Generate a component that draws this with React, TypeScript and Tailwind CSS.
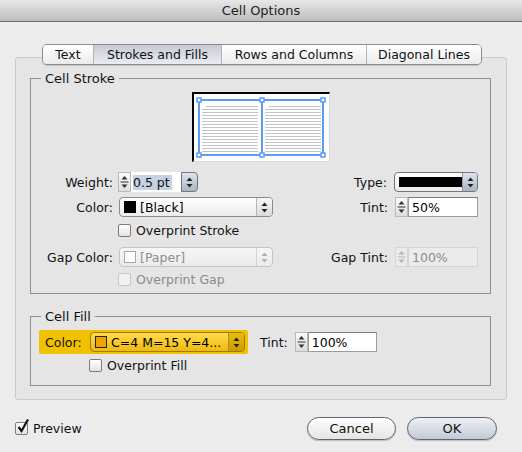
import type { ReactNode } from "react";

const font = "font-['DejaVu_Sans',sans-serif]";

function UpDown({ color = "#222" }: { color?: string }) {
  return (
    <svg width="7" height="11" viewBox="0 0 7 11">
      <path d="M3.5 0.5 L6.5 4 L0.5 4 Z" fill={color} />
      <path d="M0.5 7 L6.5 7 L3.5 10.5 Z" fill={color} />
    </svg>
  );
}

function Stepper({ disabled = false }: { disabled?: boolean }) {
  const c = disabled ? "#b4b4b4" : "#333";
  return (
    <div
      className={`flex h-[20px] w-[13px] shrink-0 items-center justify-center border ${
        disabled ? "border-[#d6d6d6] bg-[#ebebeb]" : "border-[#b9b9b9] bg-gradient-to-b from-[#fafafa] to-[#dedede]"
      }`}
    >
      <svg width="9" height="16" viewBox="0 0 9 16">
        <path d="M4.5 2 L7.5 5.5 L1.5 5.5 Z" fill={c} />
        <line x1="0.5" y1="8" x2="8.5" y2="8" stroke={c} strokeWidth="1" />
        <path d="M1.5 10.5 L7.5 10.5 L4.5 14 Z" fill={c} />
      </svg>
    </div>
  );
}

function Field({
  w,
  children,
  disabled = false,
}: {
  w: string;
  children: ReactNode;
  disabled?: boolean;
}) {
  return (
    <div
      className={`flex h-[20px] items-center border pl-[3px] ${w} ${
        disabled
          ? "border-[#d4d4d4] bg-[#ebebeb] text-[#8c8c8c]"
          : "border-[#9c9c9c] border-t-[#7a7a7a] bg-white text-black"
      }`}
    >
      {children}
    </div>
  );
}

type PopupKind = "normal" | "disabled" | "fill" | "blue";

function Popup({
  w,
  kind = "normal",
  children,
}: {
  w: string;
  kind?: PopupKind;
  children: ReactNode;
}) {
  const shell = {
    normal: "border-[#8a8a8a] bg-gradient-to-b from-white to-[#ececec] text-black",
    disabled: "border-[#c4c4c4] bg-gradient-to-b from-[#f6f6f6] to-[#ebebeb] text-[#8e8e8e]",
    fill: "border-[#a07a00] bg-gradient-to-b from-[#ffdc4a] to-[#f0b900] text-black",
    blue: "border-[#70757f] bg-gradient-to-b from-white to-[#ececec] text-black",
  }[kind];
  const arrow = {
    normal: "border-[#b6b6b6] bg-gradient-to-b from-[#f6f6f6] to-[#dadada]",
    disabled: "border-[#d2d2d2] bg-transparent",
    fill: "border-[#b58f10] bg-gradient-to-b from-[#e9bd10] to-[#c99a00]",
    blue: "border-[#8c96a4] bg-gradient-to-b from-[#dfe5ee] to-[#aab5c4]",
  }[kind];
  return (
    <div className={`flex h-[20px] items-stretch overflow-hidden rounded-[4px] border ${shell} ${w}`}>
      <div className="flex flex-1 items-center gap-[4px] pl-[4px]">{children}</div>
      <div className={`flex w-[16px] items-center justify-center border-l ${arrow}`}>
        <UpDown color={kind === "disabled" ? "#b0b0b0" : "#222"} />
      </div>
    </div>
  );
}

function Check({ on = false, disabled = false }: { on?: boolean; disabled?: boolean }) {
  return (
    <div className="relative h-[13px] w-[13px] shrink-0">
      <div
        className={`h-[13px] w-[13px] rounded-[2px] border ${
          disabled
            ? "border-[#c6c6c6] bg-[#f1f1f1]"
            : "border-[#7c7c7c] bg-gradient-to-b from-white to-[#e2e2e2]"
        }`}
      />
      {on && (
        <svg className="absolute -top-[4px] left-[1px]" width="14" height="16" viewBox="0 0 14 16">
          <path d="M2.5 9 L5.5 13 L12 1.5" fill="none" stroke="#111" strokeWidth="2.2" />
        </svg>
      )}
    </div>
  );
}

function Swatch({ color, border = "#000" }: { color: string; border?: string }) {
  return (
    <div className="h-[12px] w-[12px] shrink-0 border" style={{ background: color, borderColor: border }} />
  );
}

function CellPreview() {
  const ys = Array.from({ length: 16 }, (_, i) => 12 + i * 3);
  return (
    <div className="mx-auto mt-[6px] h-[70px] w-[138px] border-t-2 border-l-2 border-r border-b border-t-black border-l-black border-r-[#d8d8d8] border-b-[#d8d8d8] bg-white">
      <svg width="136" height="68" viewBox="0 0 136 68">
        {ys.map((y, i) => (
          <g key={y} stroke="#c4c4c4" strokeWidth="1">
            <line x1={i === 0 ? 12 : 8} y1={y + 0.5} x2="64" y2={y + 0.5} />
            <line x1={i === 0 ? 75 : 71} y1={y + 0.5} x2="127" y2={y + 0.5} />
          </g>
        ))}
        <rect x="5" y="6" width="124" height="55" fill="none" stroke="#5b9cf5" strokeWidth="2" />
        <line x1="68" y1="6" x2="68" y2="61" stroke="#5b9cf5" strokeWidth="2" />
        {[
          [5, 6],
          [68, 6],
          [129, 6],
          [5, 61],
          [68, 61],
          [129, 61],
        ].map(([x, y]) => (
          <rect key={`${x}-${y}`} x={x - 2} y={y - 2} width="4" height="4" fill="#fff" stroke="#5b9cf5" strokeWidth="1.5" />
        ))}
      </svg>
    </div>
  );
}

function Label({ children, w = "w-[82px]" }: { children: ReactNode; w?: string }) {
  return <div className={`${w} shrink-0 text-right text-[#111]`}>{children}</div>;
}

const tabs = [
  { name: "Text", w: "w-[50px]" },
  { name: "Strokes and Fills", w: "w-[128px]", on: true },
  { name: "Rows and Columns", w: "w-[145px]" },
  { name: "Diagonal Lines", w: "w-[115px]" },
];

export default function App() {
  return (
    <div className={`flex h-[452px] w-[522px] flex-col bg-[#ececec] text-[12.5px] leading-[15px] text-[#111] ${font}`}>
      {/* title bar */}
      <div className="flex h-[22px] items-center justify-center border-b border-[#6e6e6e] bg-gradient-to-b from-[#e8e8e8] to-[#bdbdbd] text-[13px] text-[#1e1e1e]">
        Cell Options
      </div>

      {/* tab strip */}
      <div className="relative z-10 mt-[22px] flex justify-center pl-[2px]">
        <div className="flex h-[21px] overflow-hidden rounded-[5px] border border-[#8b8b8b] shadow-[0_1px_1px_rgba(0,0,0,0.15)]">
          {tabs.map((t, i) => (
            <div
              key={t.name}
              className={`flex items-center justify-center ${t.w} ${i > 0 ? "border-l border-[#b4b4b4]" : ""} ${
                t.on ? "bg-gradient-to-b from-[#c6ccd5] to-[#e9ecf0]" : "bg-gradient-to-b from-white to-[#ebebeb]"
              }`}
            >
              {t.name}
            </div>
          ))}
        </div>
      </div>

      {/* tab body */}
      <div className="mx-[15px] -mt-[8px] h-[343px] rounded-[3px] border border-[#cacaca] bg-[#e5e5e5] pt-[13px] pr-[15px] pl-[14px]">
        <fieldset className="h-[223px] border border-[#8e8e8e] px-0">
          <legend className="ml-[10px] px-[4px] text-[13px]">Cell Stroke</legend>
          <CellPreview />

          <div className="mt-[10px] flex h-[20px] items-center pr-[12px]">
            <Label>Weight:</Label>
            <div className="ml-[5px] flex items-center">
              <Stepper />
              <div className="flex h-[20px] w-[50px] items-center bg-white pl-[2px]">
                <span className="bg-[#c5d2e3] pr-[2px]">0.5 pt</span>
              </div>
              <div className="flex h-[20px] w-[17px] items-center justify-center rounded-r-[4px] border border-[#70757f] bg-gradient-to-b from-[#dfe5ee] to-[#aab5c4]">
                <UpDown />
              </div>
            </div>
            <div className="ml-auto flex items-center">
              <Label w="w-auto">Type:</Label>
              <div className="ml-[7px]">
                <Popup w="w-[84px]" kind="blue">
                  <div className="h-[10px] w-[63px] bg-black" />
                </Popup>
              </div>
            </div>
          </div>

          <div className="mt-[5px] flex h-[20px] items-center pr-[12px]">
            <Label>Color:</Label>
            <div className="ml-[6px]">
              <Popup w="w-[154px]">
                <Swatch color="#000" />
                <span>[Black]</span>
              </Popup>
            </div>
            <div className="ml-auto flex items-center">
              <Label w="w-auto">Tint:</Label>
              <div className="ml-[7px] flex items-center">
                <Stepper />
                <Field w="w-[70px]">50%</Field>
              </div>
            </div>
          </div>

          <div className="mt-[6px] flex h-[14px] items-center gap-[5px] pl-[87px]">
            <Check />
            <span>Overprint Stroke</span>
          </div>

          <div className="mt-[10px] flex h-[20px] items-center pr-[12px]">
            <Label>Gap Color:</Label>
            <div className="ml-[6px]">
              <Popup w="w-[154px]" kind="disabled">
                <Swatch color="#fff" border="#a8a8a8" />
                <span>[Paper]</span>
              </Popup>
            </div>
            <div className="ml-auto flex items-center">
              <Label w="w-auto">Gap Tint:</Label>
              <div className="ml-[7px] flex items-center">
                <Stepper disabled />
                <Field w="w-[70px]" disabled>
                  100%
                </Field>
              </div>
            </div>
          </div>

          <div className="mt-[5px] flex h-[14px] items-center gap-[5px] pl-[87px] text-[#8a8a8a]">
            <Check disabled />
            <span>Overprint Gap</span>
          </div>
        </fieldset>

        <fieldset className="mt-[15px] h-[77px] border border-[#8e8e8e] px-0">
          <legend className="ml-[10px] px-[4px] text-[13px]">Cell Fill</legend>
          <div className="mt-[6px] flex items-center">
            <div className="ml-[8px] flex h-[24px] w-[209px] items-center rounded-[2px] bg-[#f1c100] pr-[3px] pl-[6px]">
              <span>Color:</span>
              <div className="ml-auto">
                <Popup w="w-[155px]" kind="fill">
                  <Swatch color="#f0a300" border="#222" />
                  <span className="whitespace-nowrap">C=4 M=15 Y=4...</span>
                </Popup>
              </div>
            </div>
            <span className="ml-[12px]">Tint:</span>
            <div className="ml-[7px] flex items-center">
              <Stepper />
              <Field w="w-[69px]">100%</Field>
            </div>
          </div>
          <div className="mt-[4px] flex h-[14px] items-center gap-[5px] pl-[58px]">
            <Check />
            <span>Overprint Fill</span>
          </div>
        </fieldset>
      </div>

      {/* footer */}
      <div className="mt-[17px] flex h-[23px] items-center pr-[25px] pl-[15px]">
        <Check on />
        <span className="ml-[5px]">Preview</span>
        <div className="ml-auto flex gap-[11px]">
          <button className="h-[23px] w-[89px] rounded-full border border-[#5f6270] bg-gradient-to-b from-white to-[#e4e4e4] text-[13px] shadow-[0_1px_1px_rgba(0,0,0,0.2)]">
            Cancel
          </button>
          <button className="h-[23px] w-[90px] rounded-full border border-[#5f6270] bg-gradient-to-b from-[#eef1f5] to-[#c2cad6] text-[13px] shadow-[0_1px_1px_rgba(0,0,0,0.2)]">
            OK
          </button>
        </div>
      </div>
    </div>
  );
}
